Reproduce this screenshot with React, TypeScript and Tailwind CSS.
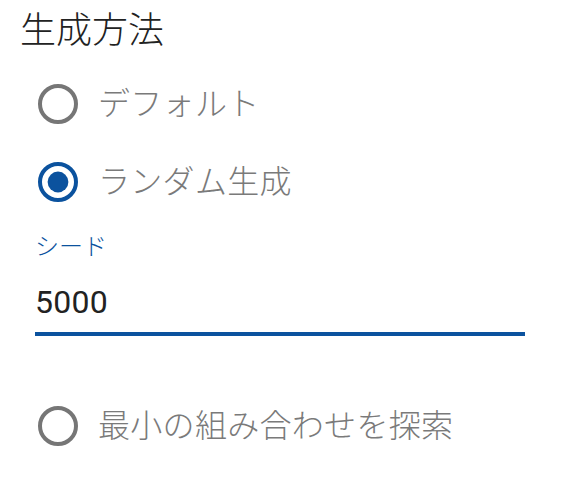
import { useState } from "react";

const BLUE = "#0b529e";

const options = [
  { value: "default", label: "デフォルト" },
  { value: "random", label: "ランダム生成" },
];

const RadioIcon = ({ checked }: { checked: boolean }) => (
  <svg width="48" height="48" viewBox="0 0 24 24" className="shrink-0">
    <circle
      cx="12"
      cy="12"
      r="9"
      fill="none"
      stroke={checked ? BLUE : "#767676"}
      strokeWidth="2"
    />
    {checked && <circle cx="12" cy="12" r="5.2" fill={BLUE} />}
  </svg>
);

const RadioRow = ({
  label,
  checked,
  onSelect,
}: {
  label: string;
  checked: boolean;
  onSelect: () => void;
}) => (
  <label
    onClick={onSelect}
    className="flex h-[78px] items-center pl-[14px] cursor-pointer"
  >
    <RadioIcon checked={checked} />
    <span className="ml-4 text-[32px] leading-[32px] font-light tracking-[0.3px] text-[#7a7a7a]">
      {label}
    </span>
  </label>
);

export default function App() {
  const [method, setMethod] = useState("random");
  const [seed, setSeed] = useState("5000");

  return (
    <div
      className="w-[586px] h-[485px] bg-white pl-5 pt-[13px]"
      style={{ fontFamily: "Roboto, 'Noto Sans CJK JP', sans-serif" }}
    >
      <p className="text-[36px] leading-[36px] font-light text-[#222222]">生成方法</p>
      <div className="mt-4">
        {options.map((o) => (
          <RadioRow
            key={o.value}
            label={o.label}
            checked={method === o.value}
            onSelect={() => setMethod(o.value)}
          />
        ))}
      </div>
      <div className="mt-[14px] ml-[15px] w-[490px]">
        <p className="text-[24px] leading-[24px] font-light text-[#0b529e]">シード</p>
        <input
          value={seed}
          onChange={(e) => setSeed(e.target.value)}
          className="mt-[27px] block w-full bg-transparent text-[32px] leading-[32px] h-[32px] tracking-[0.3px] text-[#222222] outline-none"
        />
        <div className="mt-[14px] h-1 bg-[#0b529e]" />
      </div>
      <div className="mt-[51px]">
        <RadioRow
          label="最小の組み合わせを探索"
          checked={method === "minimal"}
          onSelect={() => setMethod("minimal")}
        />
      </div>
    </div>
  );
}
